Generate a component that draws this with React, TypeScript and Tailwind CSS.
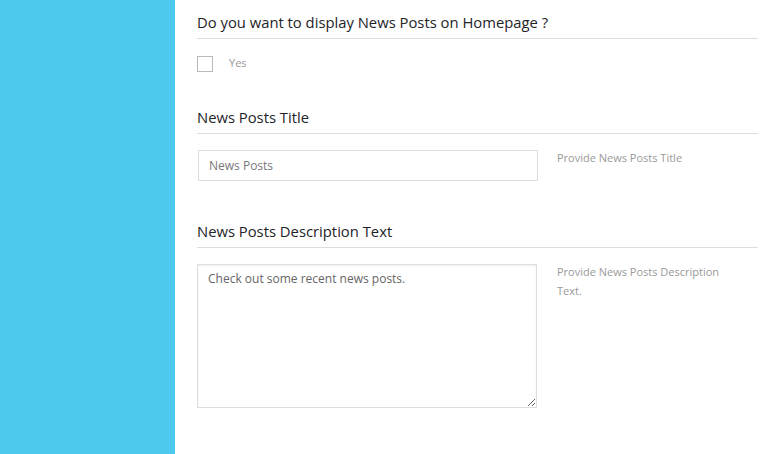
import React from "react";

const font = { fontFamily: '"Open Sans", "Noto Sans", sans-serif' };

const Heading = ({ children }: { children: React.ReactNode }) => (
  <div className="border-b border-[#dddddd] pb-[6px]">
    <h3 className="text-[14.8px] leading-[20px] text-[#1e2328]">{children}</h3>
  </div>
);

export default function App() {
  return (
    <div className="flex h-[454px] w-[772px] bg-white" style={font}>
      <aside className="w-[175px] shrink-0 bg-[#4ec8ec]" />
      <main className="flex-1 pl-[22px] pr-[14px] pt-[12px]">
        <Heading>Do you want to display News Posts on Homepage ?</Heading>
        <label className="mt-[17px] flex items-center gap-[16px]">
          <span className="h-[16px] w-[16px] border border-[#b4b9be] bg-white" />
          <span className="-mt-[2px] text-[11px] text-[#999999]">Yes</span>
        </label>

        <div className="mt-[35px]">
          <Heading>News Posts Title</Heading>
        </div>
        <div className="mt-[16px] flex">
          <input
            className="ml-[1px] h-[31px] w-[340px] border border-[#dddddd] px-[10px] text-[12px] text-[#777777] outline-none"
            defaultValue="News Posts"
            style={font}
          />
          <p className="-mt-[2px] ml-[19px] w-[175px] text-[11px] leading-[19px] text-[#999999]">
            Provide News Posts Title
          </p>
        </div>

        <div className="mt-[40px]">
          <Heading>News Posts Description Text</Heading>
        </div>
        <div className="mt-[16px] flex">
          <textarea
            className="h-[144px] w-[340px] border border-[#dddddd] px-[10px] py-[5px] text-[12px] leading-[18px] text-[#666666] shadow-[inset_0_1px_2px_rgba(0,0,0,0.07)] outline-none"
            defaultValue="Check out some recent news posts."
            style={font}
          />
          <p className="-mt-[2px] ml-[20px] w-[175px] text-[11px] leading-[19px] text-[#999999]">
            Provide News Posts Description Text.
          </p>
        </div>
      </main>
    </div>
  );
}
